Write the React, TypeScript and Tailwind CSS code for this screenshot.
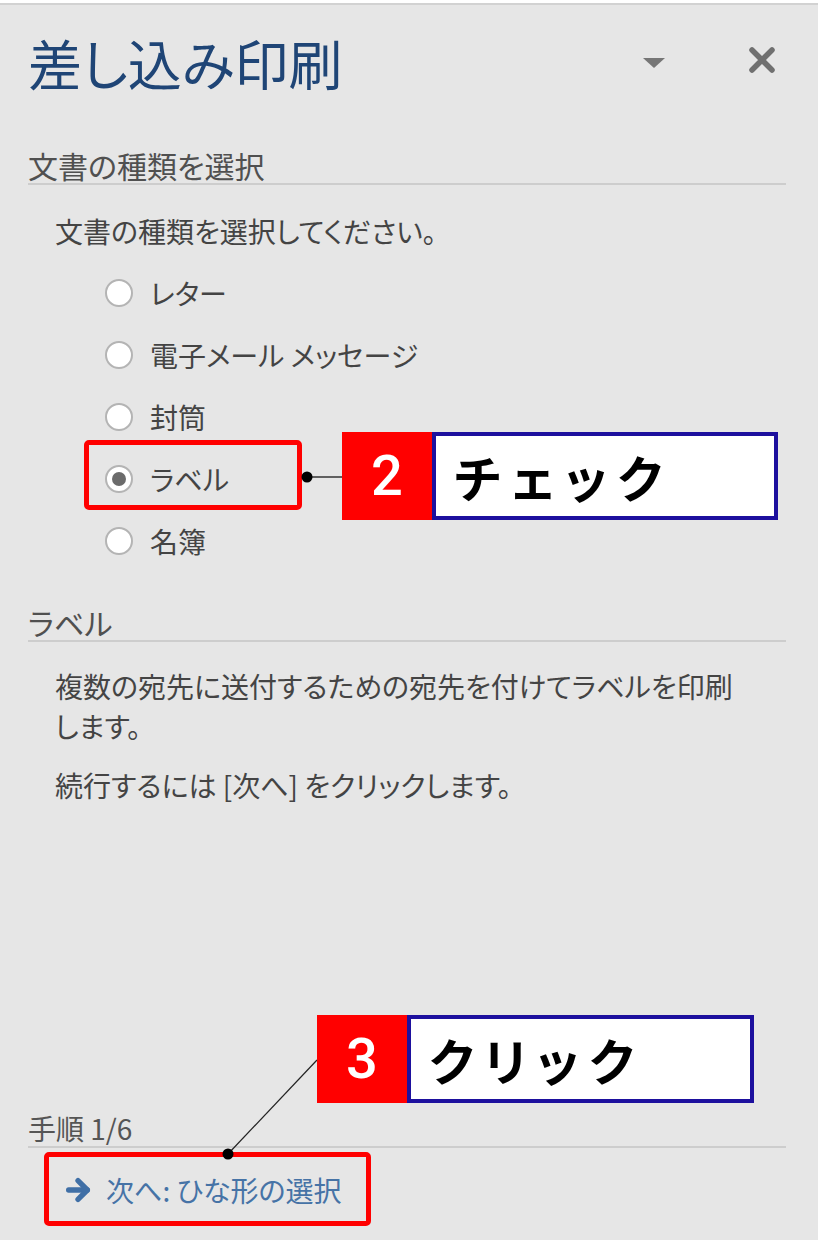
import { ArrowRight } from "lucide-react";

const FONT = "font-['Noto_Sans_CJK_JP','Noto_Sans',sans-serif] [font-feature-settings:'palt']";

function Radio({ label, checked }: { label: string; checked?: boolean }) {
  return (
    <div className="flex h-[62px] items-center pl-[77px]">
      <span className="flex h-[28px] w-[28px] items-center justify-center rounded-full border-2 border-[#b4b4b4] bg-white">
        {checked && <span className="h-[14px] w-[14px] rounded-full bg-[#6b6b6b]" />}
      </span>
      <span className="ml-[17px] text-[28px] leading-[36px] text-[#444]">{label}</span>
    </div>
  );
}

function Callout({ num, text, left, top, w }: { num: string; text: string; left: number; top: number; w: number }) {
  return (
    <div className="absolute flex" style={{ left, top }}>
      <div className="flex h-[88px] w-[90px] items-center justify-center bg-[#ff0000] font-['Roboto','Liberation_Sans',sans-serif] text-[56px] font-medium text-white">
        {num}
      </div>
      <div
        className="flex h-[88px] items-center border-[4px] border-[#1d109e] bg-white pl-[18px] text-[50px] font-bold tracking-[10px] text-black"
        style={{ width: w }}
      >
        {text}
      </div>
    </div>
  );
}

export default function App() {
  return (
    <div className={`relative h-[1240px] w-[818px] overflow-hidden bg-[#e6e6e6] ${FONT}`}>
      <div className="h-[3px] bg-white" />
      <div className="h-[2px] bg-[#d2d2d2]" />

      <div className="pl-[28px] pr-[32px]">
        {/* title bar */}
        <div className="mt-[28px] flex h-[60px] items-center">
          <h1 className="text-[54px] leading-[60px] font-normal text-[#1f4576]">差し込み印刷</h1>
          <div className="ml-auto flex items-center">
            <svg width="22" height="10" viewBox="0 0 22 10" className="mr-[84px]">
              <polygon points="0,0 22,0 11,10" fill="#767676" />
            </svg>
            <svg width="26" height="26" viewBox="0 0 26 26" className="mr-[11px] -mt-[6px]">
              <path d="M3 3 L23 23 M23 3 L3 23" stroke="#707070" strokeWidth="5.5" strokeLinecap="round" />
            </svg>
          </div>
        </div>

        {/* document type */}
        <div className="mt-[54px] border-b-2 border-[#cdcdcd] text-[30px] leading-[36px] text-[#505050]">
          文書の種類を選択
        </div>
        <p className="mt-[28px] pl-[27px] text-[28px] leading-[36px] text-[#444]">文書の種類を選択してください。</p>

        <div className="mt-[13px]">
          <Radio label="レター" />
          <Radio label="電子メール メッセージ" />
          <Radio label="封筒" />
          <Radio label="ラベル" checked />
          <Radio label="名簿" />
        </div>

        {/* label section */}
        <div className="mt-[32px] border-b-2 border-[#cdcdcd] text-[30px] leading-[36px] text-[#505050]">ラベル</div>
        <p className="mt-[24px] pl-[27px] text-[28px] leading-[40px] text-[#444]">
          複数の宛先に送付するための宛先を付けてラベルを印刷
          <br />
          します。
        </p>
        <p className="mt-[19px] pl-[27px] text-[28px] leading-[40px] text-[#444]">続行するには [次へ] をクリックします。</p>

        {/* footer */}
        <div className="mt-[305px] border-b-2 border-[#cdcdcd] text-[28px] leading-[36px] text-[#555]">手順 1/6</div>
        <div className="mt-[24px] flex items-center pl-[34px] text-[28px] leading-[36px] text-[#4673a6]">
          <ArrowRight size={32} strokeWidth={4} className="mr-[12px] text-[#3f6fa6]" />
          次へ: ひな形の選択
        </div>
      </div>

      {/* annotations */}
      <div className="absolute left-[84px] top-[440px] h-[70px] w-[218px] rounded-[5px] border-[5px] border-[#ff0000]" />
      <div className="absolute left-[44px] top-[1152px] h-[74px] w-[327px] rounded-[5px] border-[5px] border-[#ff0000]" />
      <svg className="absolute left-0 top-0" width="818" height="1240">
        <line x1="307" y1="477" x2="342" y2="477" stroke="#333" strokeWidth="1.5" />
        <circle cx="307" cy="477" r="5.5" fill="#000" />
        <line x1="228" y1="1154" x2="317" y2="1060" stroke="#222" strokeWidth="1.2" />
        <circle cx="228" cy="1154" r="5.5" fill="#000" />
      </svg>
      <Callout num="2" text="チェック" left={342} top={432} w={346} />
      <Callout num="3" text="クリック" left={317} top={1015} w={347} />
    </div>
  );
}
